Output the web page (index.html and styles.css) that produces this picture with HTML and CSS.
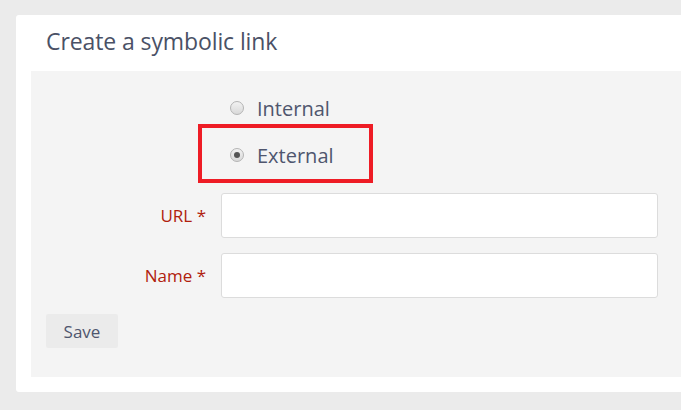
FILE: index.html
```html
<!DOCTYPE html>
<html>
<head>
<meta charset="utf-8">
<link rel="stylesheet" href="styles.css">
</head>
<body>
<div class="card">
  <h1 class="title">Create a symbolic link</h1>
  <div class="panel">
    <div class="choices">
      <label class="choice"><span class="radio"></span><span>Internal</span></label>
      <label class="choice marked"><span class="radio on"></span><span>External</span><span class="mark"></span></label>
    </div>
    <div class="row">
      <label class="lbl">URL *</label>
      <div class="input"></div>
    </div>
    <div class="row">
      <label class="lbl">Name *</label>
      <div class="input"></div>
    </div>
    <div class="actions"><button class="btn">Save</button></div>
  </div>
</div>
</body>
</html>
```
FILE: styles.css
```css
html, body { margin: 0; padding: 0; }
body {
  background: #ebebeb;
  width: 681px;
  height: 410px;
  overflow: hidden;
  font-family: "Open Sans", "DejaVu Sans", sans-serif;
  padding-top: 15px;
  padding-left: 16px;
  box-sizing: border-box;
}
.card {
  background: #fff;
  width: 665px;
  border-radius: 3px 0 0 3px;
  padding: 0 0 15px 15px;
  box-sizing: border-box;
}
.title {
  margin: 0;
  height: 56px;
  box-sizing: border-box;
  padding: 11px 0 0 15px;
  font-size: 23px;
  font-weight: normal;
  color: #4a5166;
  line-height: 30px;
  letter-spacing: -0.1px;
}
.panel {
  background: #f4f4f4;
  height: 306px;
  padding: 17px 0 0 15px;
  box-sizing: border-box;
}
.choices {
  display: flex;
  flex-direction: column;
  gap: 7px;
  padding-left: 184px;
}
.choice {
  position: relative;
  display: flex;
  align-items: center;
  gap: 13px;
  height: 40px;
  font-size: 20px;
  color: #4f566e;
}
.radio {
  width: 12px;
  height: 12px;
  border: 1px solid #b4b4b4;
  border-radius: 50%;
  background: linear-gradient(#f2f2f2, #d9d9d9);
  display: flex;
  align-items: center;
  justify-content: center;
}
.radio.on::after {
  content: "";
  width: 6px;
  height: 6px;
  border-radius: 50%;
  background: #555;
}
.mark {
  position: absolute;
  left: -32px;
  top: -11px;
  width: 175px;
  height: 59px;
  border: 4px solid #ee1c25;
  box-sizing: border-box;
}
.row {
  display: flex;
  align-items: center;
  gap: 15px;
  margin-top: 15px;
}
.choices + .row { margin-top: 18px; }
.lbl {
  width: 160px;
  text-align: right;
  font-size: 17px;
  color: #b0200c;
}
.input {
  width: 437px;
  height: 45px;
  box-sizing: border-box;
  background: #fff;
  border: 1px solid #dcdcdc;
  border-radius: 3px;
}
.actions { margin-top: 16px; }
.btn {
  width: 72px;
  height: 34px;
  border: none;
  border-radius: 2px;
  background: #ebebeb;
  font-family: inherit;
  font-size: 17px;
  color: #4f566e;
  padding: 0;
}
```
